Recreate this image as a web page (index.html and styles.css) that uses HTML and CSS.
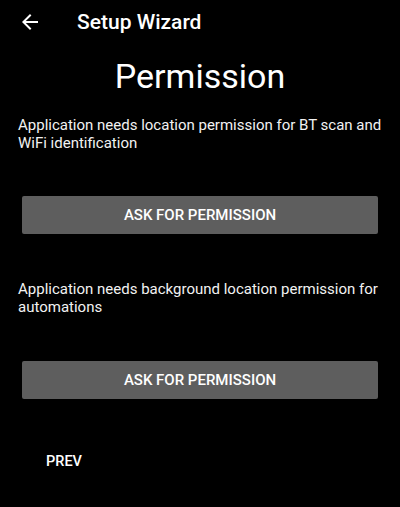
FILE: index.html
```html
<!DOCTYPE html>
<html>
<head>
<meta charset="utf-8">
<link rel="stylesheet" href="styles.css">
</head>
<body>
<div class="app">
  <header class="toolbar">
    <svg class="back" width="24" height="24" viewBox="0 0 24 24"><path d="M20 11H7.83l5.59-5.59L12 4l-8 8 8 8 1.41-1.41L7.83 13H20v-2z" fill="#fff"/></svg>
    <span class="tb-title">Setup Wizard</span>
  </header>
  <h1 class="title">Permission</h1>
  <p class="desc">Application needs location permission for BT scan and WiFi identification</p>
  <button class="btn">ASK FOR PERMISSION</button>
  <p class="desc desc2">Application needs background location permission for automations</p>
  <button class="btn btn2">ASK FOR PERMISSION</button>
  <div class="nav"><span class="prev">PREV</span></div>
</div>
</body>
</html>
```
FILE: styles.css
```css
html, body { margin: 0; padding: 0; background: #000; }
body { font-family: Roboto, "Noto Sans", sans-serif; color: #fff; width: 400px; height: 507px; overflow: hidden; }
.app { display: flex; flex-direction: column; }
.toolbar { height: 44px; display: flex; align-items: center; padding-left: 18px; }
.back { width: 24px; height: 24px; }
.tb-title { margin-left: 35px; font-size: 21px; font-weight: 500; }
.title { margin: 10px 0 0; text-align: center; font-size: 34px; font-weight: 400; line-height: 44px; }
.desc { margin: 18px 18px 0; font-size: 15px; line-height: 18px; color: #f2f2f2; }
.desc2 { margin-top: 46px; }
.btn { margin: 44px 22px 0; height: 38px; background: #5e5e5e; color: #fff; border: none; border-radius: 2px; font-family: inherit; font-size: 15px; font-weight: 500; padding: 0; }
.btn2 { margin-top: 45px; }
.nav { padding: 52px 0 0 46px; }
.prev { font-size: 14.5px; font-weight: 500; }
```
